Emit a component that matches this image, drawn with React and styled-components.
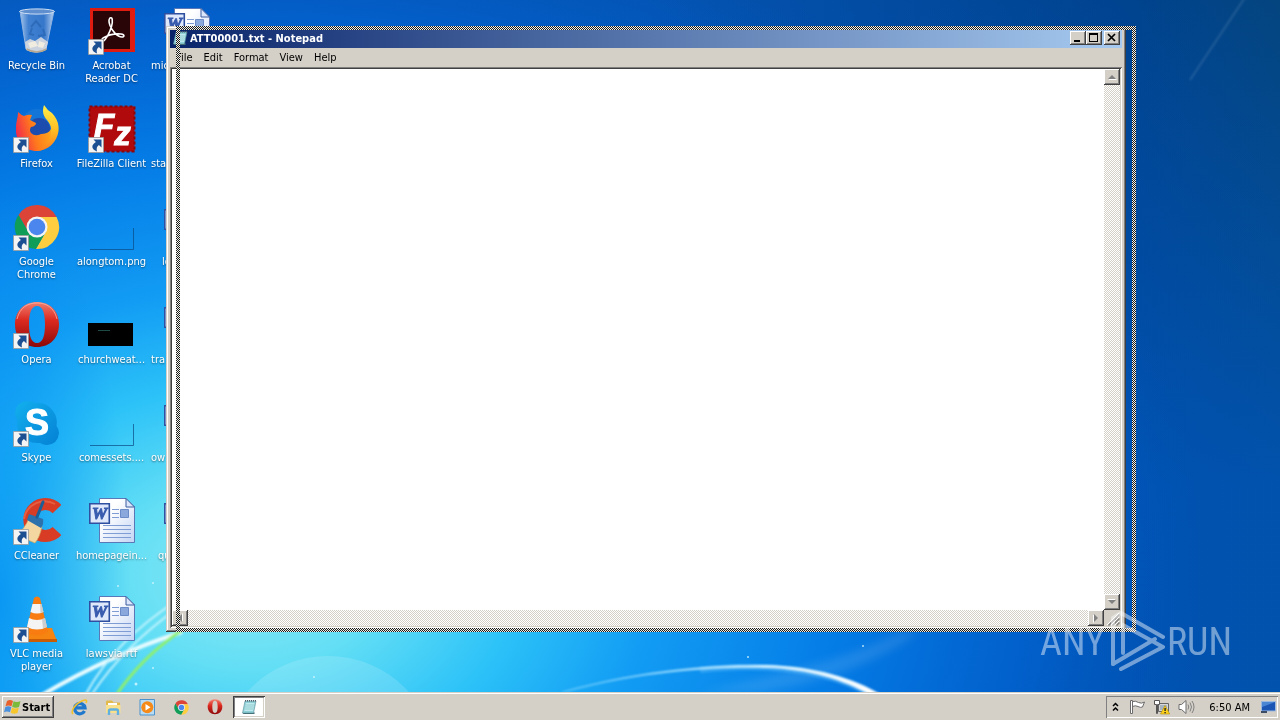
import React from 'react';
import styled, { createGlobalStyle, css } from 'styled-components';

const GlobalStyle = createGlobalStyle`
  * {
    box-sizing: border-box;
  }
  body {
    margin: 0;
    font-family: Tahoma, 'DejaVu Sans Condensed', 'DejaVu Sans', sans-serif;
    font-size: 11px;
    line-height: 13px;
    color: #000;
  }
  button {
    font: inherit;
    color: inherit;
    border: none;
    background: none;
    padding: 0;
  }
  svg {
    display: block;
    flex: none;
  }
`;

const raised = css`
  background: #d4d0c8;
  box-shadow: inset -1px -1px #404040, inset 1px 1px #fff,
    inset -2px -2px #808080;
`;

const checker = css`
  background: repeating-conic-gradient(#fff 0 25%, #d4d0c8 0 50%) 0 0 / 2px 2px;
`;

const Screen = styled.div`
  display: flex;
  flex-direction: column;
  min-height: 100vh;
  overflow: hidden;
`;

const Desktop = styled.main`
  position: relative;
  flex: 1;
  overflow: hidden;
  background: #0353b5;
`;

const WallpaperSvg = styled.svg`
  position: absolute;
  inset: 0;
  width: 100%;
  height: 100%;
`;

const IconGrid = styled.div`
  position: relative;
  display: grid;
  grid-auto-flow: column;
  grid-template-rows: repeat(7, 98px);
  grid-auto-columns: 75px;
`;

const Shortcut = styled.button`
  display: flex;
  flex-direction: column;
  align-items: center;
  gap: 4px;
  padding: 7px 2px 0 0;
  color: #fff;
`;

const ShortcutLabel = styled.span`
  max-width: 74px;
  text-shadow: 0 1px 2px rgba(0, 0, 0, 0.5);
  ${(p) =>
    p.$indent &&
    css`
      align-self: flex-start;
      padding-left: ${p.$indent}px;
    `}
`;

/* Window */

const Window = styled.section`
  position: absolute;
  top: 26px;
  right: 154px;
  bottom: 60px;
  left: 166px;
  display: flex;
  flex-direction: column;
  padding: 4px;
  background: #d4d0c8;
  box-shadow: inset -1px -1px #404040, inset 1px 1px #d4d0c8,
    inset -2px -2px #808080, inset 2px 2px #fff;
`;

const TitleBar = styled.header`
  display: flex;
  align-items: center;
  height: 18px;
  padding: 0 2px 2px;
  color: #fff;
  background: linear-gradient(90deg, #0a246a, #a6caf0);
`;

const Title = styled.h1`
  flex: 1;
  margin: 0 0 0 2px;
  font-size: 11px;
  font-weight: bold;
`;

const CaptionButton = styled.button`
  ${raised}
  width: 16px;
  height: 14px;
  margin-left: ${(p) => (p.$apart ? '2px' : '0')};
`;

const MenuBar = styled.nav`
  display: flex;
  height: 19px;
  padding-left: 1px;
`;

const MenuItem = styled.button`
  padding: 0 6px 0 5px;
`;

const Client = styled.div`
  flex: 1;
  display: grid;
  grid-template: 1fr 16px / 1fr 16px;
  padding: 2px;
  background: #fff;
  box-shadow: inset 1px 1px #808080, inset -1px -1px #fff,
    inset 2px 2px #404040, inset -2px -2px #d4d0c8;
`;

const TextArea = styled.textarea`
  width: 100%;
  height: 100%;
  border: none;
  outline: none;
  resize: none;
  font: 13px 'Liberation Mono', monospace;
  background: #fff;
`;

const ScrollBar = styled.div`
  ${checker}
  display: flex;
  flex-direction: ${(p) => (p.$vertical ? 'column' : 'row')};
  justify-content: space-between;
`;

const ScrollButton = styled.button`
  ${raised}
  width: 16px;
  height: 16px;
`;

const Grip = styled.div`
  background: #d4d0c8;
`;

const DragOutline = styled.div`
  position: absolute;
  top: 26px;
  right: 144px;
  bottom: 60px;
  left: 176px;
  padding: 4px;
  background: repeating-conic-gradient(#f4f2ec 0 25%, #1c1c1c 0 50%) 0 0 / 2px 2px;
  mask: linear-gradient(#000 0 0) content-box exclude, linear-gradient(#000 0 0);
  pointer-events: none;
`;

const Watermark = styled.div`
  position: absolute;
  right: 48px;
  bottom: 18px;
  display: flex;
  align-items: center;
  gap: 2px;
  color: #fff;
  opacity: 0.45;
  font: 400 38px/64px 'Roboto Condensed', 'Liberation Sans Narrow', sans-serif;
  pointer-events: none;
`;

/* Taskbar */

const TaskBar = styled.footer`
  position: relative;
  display: flex;
  align-items: center;
  height: 28px;
  padding: 2px 2px 0;
  background: #d4d0c8;
  box-shadow: inset 0 1px #d4d0c8, inset 0 2px #fff;
`;

const StartButton = styled.button`
  ${raised}
  display: flex;
  align-items: center;
  gap: 1px;
  height: 22px;
  padding: 0 4px 0 2px;
  font-weight: bold;
`;

const QuickLaunch = styled.div`
  flex: 1;
  display: flex;
  margin-left: 8px;
`;

const LaunchButton = styled.button`
  display: grid;
  place-items: center;
  width: 34px;
  height: 22px;
`;

const TaskButton = styled(LaunchButton)`
  width: 32px;
  margin-left: 1px;
  background: #fff;
  box-shadow: inset 1px 1px #404040, inset -1px -1px #fff,
    inset 2px 2px #808080, inset -2px -2px #d4d0c8;
`;

const Tray = styled.div`
  display: flex;
  align-items: center;
  gap: 8px;
  height: 22px;
  padding: 0 1px 0 4px;
  box-shadow: inset 1px 1px #808080, inset -1px -1px #fff;
`;

const Clock = styled.time`
  margin: 0 2px 0 6px;
`;

const Wallpaper = () => (
  <WallpaperSvg viewBox='0 0 1280 692' preserveAspectRatio='none'>
    <defs>
      <linearGradient id='sky' x1='0' y1='0' x2='1' y2='0'>
        <stop offset='0' stopColor='#0a57b8' />
        <stop offset='0.5' stopColor='#0454b4' />
        <stop offset='0.88' stopColor='#00438f' />
        <stop offset='1' stopColor='#04457f' />
      </linearGradient>
      <linearGradient id='deep' x1='0' y1='0' x2='0' y2='1'>
        <stop offset='0' stopColor='#0058c4' stopOpacity='0' />
        <stop offset='0.7' stopColor='#0058c0' />
      </linearGradient>
      <radialGradient id='glow' gradientUnits='userSpaceOnUse' cx='0' cy='0' r='1' gradientTransform='translate(250 575) scale(960 680)'>
        <stop offset='0' stopColor='#8ce8f4' />
        <stop offset='0.14' stopColor='#62def5' />
        <stop offset='0.28' stopColor='#2cc2f8' />
        <stop offset='0.42' stopColor='#129cf4' />
        <stop offset='0.62' stopColor='#047ce6' />
        <stop offset='0.82' stopColor='#0262d0' stopOpacity='0.8' />
        <stop offset='1' stopColor='#0256b8' stopOpacity='0' />
      </radialGradient>
      <radialGradient id='edge' gradientUnits='userSpaceOnUse' cx='0' cy='0' r='1' gradientTransform='translate(0 600) scale(130 420)'>
        <stop offset='0' stopColor='#008cf2' stopOpacity='0.8' />
        <stop offset='1' stopColor='#008cf2' stopOpacity='0' />
      </radialGradient>
      <linearGradient id='arc' x1='0' y1='0' x2='1' y2='0'>
        <stop offset='0' stopColor='#7fd6ff' stopOpacity='0.6' />
        <stop offset='0.55' stopColor='#c4ecff' />
        <stop offset='1' stopColor='#fff' />
      </linearGradient>
      <filter id='soft' x='-10%' y='-30%' width='120%' height='160%'>
        <feGaussianBlur stdDeviation='1' />
      </filter>
      <filter id='haze' x='-20%' y='-50%' width='140%' height='200%'>
        <feGaussianBlur stdDeviation='4' />
      </filter>
    </defs>
    <path fill='url(#sky)' d='M0 0h1280v692H0z' />
    <path fill='url(#deep)' d='M0 0h1280v692H0z' opacity='0.7' />
    <path fill='url(#glow)' d='M0 0h1280v692H0z' />
    <path fill='url(#edge)' d='M0 150h130v542H0z' />
    <path stroke='#fff' strokeWidth='2' opacity='0.12' filter='url(#soft)' d='M1190 80L1246 -4' />
    <circle cx='328' cy='765' r='109' fill='#fff' opacity='0.14' />
    <path fill='#fff' opacity='0.1' filter='url(#haze)' d='M700 692Q850 660 900 632H920Q850 680 760 692z' />
    <g fill='none' filter='url(#soft)'>
      <path stroke='#e8fcff' strokeWidth='4' d='M42 695Q110 655 182 632' />
      <path stroke='#c5f4fd' strokeWidth='2' d='M86 694Q115 640 178 600M92 694Q125 645 178 608' />
      <path stroke='#8ff06c' strokeWidth='3' d='M117 694Q142 657 182 630' />
      <path stroke='#58b8fc' strokeWidth='6' opacity='0.5' d='M700 670Q810 658 878 698' />
    </g>
    <path fill='url(#arc)' filter='url(#soft)' d='M560 692C650 667 720 665 765 665C815 666 855 679 880 694H868C845 681 810 669 765 668C720 667 650 670 566 692z' />
    <g fill='#d9f9ff' opacity='0.8'>
      <circle cx='118' cy='586' r='1' />
      <circle cx='153' cy='583' r='1' />
      <circle cx='136' cy='684' r='1.5' />
      <circle cx='153' cy='668' r='1' />
      <circle cx='863' cy='646' r='1' />
      <circle cx='748' cy='657' r='1' />
      <circle cx='314' cy='677' r='1' />
    </g>
  </WallpaperSvg>
);

const Arrow = () => (
  <g>
    <path fill='#f4f4f4' stroke='#9a9a9a' strokeWidth='0.8' d='M0.5 32.5h15v15h-15z' />
    <path fill='#1c4f91' d='M5.5 34.5H13.500v8l-2.600-2.400c-2.200 1.600-2.600 3.600-1.900 6.300-5.800-2-6.200-6.400-1.100-9.400z' />
  </g>
);

const RecycleIcon = () => (
  <svg width='48' height='48' viewBox='0 0 48 48'>
    <defs>
      <linearGradient id='glass' x1='0' x2='1'>
        <stop offset='0' stopColor='#c8dcf4' stopOpacity='0.85' />
        <stop offset='0.25' stopColor='#5c90d4' stopOpacity='0.7' />
        <stop offset='0.7' stopColor='#4c82cc' stopOpacity='0.7' />
        <stop offset='1' stopColor='#d4e4f8' stopOpacity='0.9' />
      </linearGradient>
    </defs>
    <path fill='url(#glass)' stroke='#8fb2e0' d='M7 4L13 42q10 6 20 0L41 4z' />
    <path fill='#d9dce0' opacity='0.9' d='M12 35l5-3 5 2 6-4 7 5-2 8q-10 5-20 0z' />
    <path fill='#f1ece0' d='M15 36l7-2 3 5-8 2zM26 34l6 2-2 5-5-1z' />
    <ellipse cx='24' cy='4.5' rx='17.5' ry='2.6' fill='#5f8fce' stroke='#d0e0f4' strokeWidth='1' />
    <path fill='none' stroke='#2560ac' strokeWidth='2' opacity='0.6' d='M18 20l5-6 5 6M30 22l2 6-7 1M21 28l-4-1 2-6' />
    <path fill='none' stroke='#b6a78f' strokeWidth='1.5' d='M13.500 42q10.500 6 20 0' />
  </svg>
);

const AcrobatIcon = () => (
  <svg width='48' height='48' viewBox='0 0 48 48'>
    <path fill='#e01c10' d='M2 1h45v44H2z' />
    <path fill='#2a0507' d='M5 4h37v38H5z' />
    <path fill='none' stroke='#fff' strokeWidth='1.6' strokeLinejoin='round' d='M22 11c2.500-1.500 3 3 1.500 8.500-2 7-6 13.500-8.500 15-2.500 1-2.500-1.500 0-3.500 5-3 12-4.500 18-4 4 .5 3.500 3 1 3-5 0-10-6.500-12-11.500-1.300-3.500-1-6.500 0-7.500z' />
    <Arrow />
  </svg>
);

const FirefoxIcon = () => (
  <svg width='48' height='48' viewBox='0 0 48 48'>
    <defs>
      <linearGradient id='fox' x1='0' y1='0.6' x2='1' y2='0.3'>
        <stop offset='0' stopColor='#f0264e' />
        <stop offset='0.45' stopColor='#ff7a1c' />
        <stop offset='1' stopColor='#ffb41c' />
      </linearGradient>
      <linearGradient id='tail' x1='0' y1='0' x2='0' y2='1'>
        <stop offset='0' stopColor='#fff04a' />
        <stop offset='0.55' stopColor='#ffbd20' />
        <stop offset='1' stopColor='#ff7a20' />
      </linearGradient>
    </defs>
    <circle cx='24' cy='20' r='16' fill='#1375d8' />
    <circle cx='26' cy='24' r='11' fill='#1c4cae' />
    <path fill='url(#fox)' d='M5 7q3 3 6 4 5-2 8-1l-2 5 6 3q0 3-5 4-2 3 0 6 4 4 10 1c8 0 10-4 11-8 6 10-3 25-15 25C11 46 2 36 3 23 3 16 5 13 5 7z' />
    <path fill='url(#tail)' d='M31 0q3 5 8 8c8 8 9 20 2 29-4 6-12 9-18 9 8-3 12-8 14-14 3-9 0-13-3-17-4-4-5-9-3-15z' />
    <Arrow />
  </svg>
);

const FileZillaIcon = () => (
  <svg width='48' height='48' viewBox='0 0 48 48'>
    <path fill='#b00a0c' stroke='#8c0608' strokeDasharray='3 2' strokeWidth='2' d='M1.500 1.500h45v45h-45z' />
    <text x='6' y='32' fill='#fff' stroke='#fff' fontFamily='Liberation Sans, sans-serif' fontStyle='italic' fontWeight='bold' fontSize='33'>
      F<tspan dy='8'>z</tspan>
    </text>
    <Arrow />
  </svg>
);

const ChromeMark = () => (
  <g>
    <path fill='#db4437' d='M15.300 29L5.500 12A22 22 0 0 1 43.600 14H24z' />
    <path fill='#ffcd40' d='M24 14H43.600A22 22 0 0 1 22.900 46L32.700 29z' />
    <path fill='#0f9d58' d='M32.700 29L22.900 46A22 22 0 0 1 5.500 12L15.300 29z' />
    <circle cx='24' cy='24' r='10.5' fill='#f4f4f4' />
    <circle cx='24' cy='24' r='8.3' fill='#4a86ee' />
  </g>
);

const ChromeIcon = () => (
  <svg width='48' height='48' viewBox='0 0 48 48'>
    <ChromeMark />
    <Arrow />
  </svg>
);

const OperaMark = () => (
  <g>
    <path fill='url(#opera)' fillRule='evenodd' d='M24 1C37 1 46 10 46 23.500S37 46 24 46 2 37 2 23.500 11 1 24 1zM24 5c-6 0-8 8-8 18.500S18 42 24 42s8-8 8-18.500S30 5 24 5z' />
    <path fill='none' stroke='#ffb8ae' opacity='0.7' d='M4 18C7 6 15 2 24 2s17 4 20 16' />
  </g>
);

const OperaIcon = () => (
  <svg width='48' height='48' viewBox='0 0 48 48'>
    <defs>
      <linearGradient id='opera' x1='0' y1='0' x2='0' y2='1'>
        <stop offset='0' stopColor='#f08070' />
        <stop offset='0.4' stopColor='#dc2a20' />
        <stop offset='1' stopColor='#8c0808' />
      </linearGradient>
    </defs>
    <OperaMark />
    <Arrow />
  </svg>
);

const SkypeIcon = () => (
  <svg width='48' height='48' viewBox='0 0 48 48'>
    <defs>
      <linearGradient id='skype' x1='0' y1='0' x2='1' y2='1'>
        <stop offset='0' stopColor='#12b0ee' />
        <stop offset='1' stopColor='#0480d4' />
      </linearGradient>
    </defs>
    <path fill='url(#skype)' d='M14 2q5 0 8 2.200Q34 3 40 12q5 7 3.500 15Q46 30 46 34 45 45 34 46q-4 0-7-2Q14 45 7 35 3 28 4.500 21 2 18 2 14 3 3 14 2z' />
    <text x='24' y='36' fill='#fff' stroke='#fff' textAnchor='middle' fontFamily='Liberation Sans, sans-serif' fontWeight='bold' fontSize='36'>S</text>
    <Arrow />
  </svg>
);

const CCleanerIcon = () => (
  <svg width='48' height='48' viewBox='0 0 48 48'>
    <path fill='none' stroke='#d83c24' strokeWidth='12' d='M44 12A16 16 0 1 0 44 34' />
    <path fill='none' stroke='#f07454' strokeWidth='2' opacity='0.6' d='M42 7A21 21 0 0 0 11 22' />
    <path fill='#f4d7a0' stroke='#d2a660' strokeWidth='0.7' d='M16 21L29 29Q27 40 22 46L3 38Q12 32 16 21z' />
    <path fill='#2c70ac' d='M16 17L30 22Q31 27 28 31L14 23z' />
    <path stroke='#1c5f96' strokeWidth='3' strokeLinecap='round' d='M30 5L24 20' />
    <Arrow />
  </svg>
);

const VlcIcon = () => (
  <svg width='48' height='48' viewBox='0 0 48 48'>
    <path fill='#f58410' d='M8 33H39L44 46H4z' />
    <path fill='#c95d05' d='M4 44h40v3H4z' />
    <path fill='#f87c10' d='M21 3q3-3 6 0L35 37q-11 7-22 0z' />
    <path fill='#f4f4f4' d='M19.500 9h9L30.500 17q-6.500 3-13 0zM16 23q8 4 16 0L34 32q-10 5-20 0z' />
    <path fill='#b4b4b4' opacity='0.6' d='M27 9h1.500l2 8-3 1zM29 24l3-1L34 32l-4 1.500z' />
    <Arrow />
  </svg>
);

const WordIcon = () => (
  <svg width='48' height='48' viewBox='0 0 48 48'>
    <defs>
      <linearGradient id='page' x1='0' y1='0' x2='1' y2='1'>
        <stop offset='0.3' stopColor='#fff' />
        <stop offset='1' stopColor='#c3d4f4' />
      </linearGradient>
    </defs>
    <path fill='url(#page)' stroke='#5a78b8' d='M11.500 1.500H38L46.500 10V45.500H11.500z' />
    <path fill='#dbe6fa' stroke='#3d5c9e' d='M38 1.500V10H46.500z' />
    <path stroke='#7f9cd4' d='M24 12.500h7M24 16.500h7M24 20.500h7M15 28.500h28M15 32.500h28M15 36.500h28M15 40.500h28' />
    <path fill='#8ba8dc' stroke='#6a8ac8' d='M32.500 12.500h8v8h-8z' />
    <path fill='#dfe8fb' stroke='#2f4fa0' strokeWidth='1.6' d='M1.800 6.800h19.500v19.500H1.800z' />
    <text x='11.5' y='22' fill='#3a5cae' textAnchor='middle' fontFamily='Liberation Serif, serif' fontStyle='italic' fontWeight='bold' fontSize='17' stroke='#3a5cae'>W</text>
  </svg>
);

const GhostIcon = () => (
  <svg width='48' height='48' viewBox='0 0 48 48'>
    <path fill='none' stroke='#0b4a84' opacity='0.7' d='M2 46.500H45.500V25' />
  </svg>
);

const BlackIcon = () => (
  <svg width='48' height='48' viewBox='0 0 48 48'>
    <path fill='#000' d='M0 22h45v23H0z' />
    <path stroke='#1d4a44' d='M10 29.500h12' />
  </svg>
);

const BlankIcon = () => <svg width='48' height='48' />;

const NotepadIcon = () => (
  <svg width='16' height='16' viewBox='0 0 16 16'>
    <path fill='#8fd0d8' stroke='#5c8f98' strokeWidth='0.6' d='M4 2H15L12.500 14H1.500z' />
    <path fill='#bfe9ec' d='M5 4h8.500l-1.500 8H3.300z' />
    <path stroke='#6fb0ba' strokeWidth='0.5' d='M4.500 6h8.500M4 8h8.500M3.700 10H12' />
    <path stroke='#55606a' strokeWidth='1.6' strokeDasharray='1 1' d='M4 1.800H15.500' />
    <path fill='#44707a' d='M1.500 14h11l1-1v2h-11z' />
  </svg>
);

const WindowsIcon = () => (
  <svg width='17' height='16' viewBox='0 0 17 16'>
    <path fill='#e8602c' d='M3 2q3-2 6 0L7.500 7.300q-3-1.500-6 0z' />
    <path fill='#7cba3c' d='M9.600 2.300q3 1.500 6.900 0L15 8q-3.300 1.500-6.900-.2z' />
    <path fill='#4a90dc' d='M1.300 8q3-1.500 6 0L6 13.300q-3-1.700-6 0z' />
    <path fill='#f7c62c' d='M8 8.500q3 1.700 6.800.2L13.500 14q-3.500 1.500-6.800-.2z' />
  </svg>
);

const ExplorerIcon = () => (
  <svg width='17' height='17' viewBox='0 0 17 17'>
    <path fill='none' stroke='#1f78cc' strokeWidth='3.2' d='M13.500 12A5.200 5.200 0 1 1 14 8.800H5' />
    <path fill='none' stroke='#f2c02c' strokeWidth='1.6' d='M2 15C-1 12 5 4 12 1.500 16 0 16 2 15 4' />
  </svg>
);

const FolderIcon = () => (
  <svg width='17' height='17' viewBox='0 0 17 17'>
    <path fill='#e3b94c' d='M1 3q0-1.500 1-1.500h5l1.500 2H15v10H1z' />
    <path fill='#f8e08c' d='M1 6h14.500v8H1z' />
    <path fill='#fff' d='M3 4h9v2H3z' />
    <path fill='none' stroke='#62b0e0' strokeWidth='2.4' d='M4 16v-4q0-1.500 1.500-1.500h6q1.500 0 1.500 1.500v4' />
  </svg>
);

const PlayerIcon = () => (
  <svg width='17' height='17' viewBox='0 0 17 17'>
    <path fill='#b8dcf4' stroke='#4c92cc' d='M1 .5h14.500v15.500H1z' />
    <circle cx='8.3' cy='8.3' r='6' fill='#f58a18' />
    <path fill='#fff' d='M6.500 5l5 3.300-5 3.300z' />
  </svg>
);

const FlagIcon = () => (
  <svg width='17' height='16' viewBox='0 0 17 16'>
    <path fill='#fff' stroke='#6c6c6c' d='M1.500 1.500h2v13h-2zM3.500 2.500q3-1 6 1 3 1.500 6-.5l-2 5q-2 1-4.500-.5t-5.500 0z' />
  </svg>
);

const NetworkIcon = () => (
  <svg width='16' height='16' viewBox='0 0 16 16'>
    <path fill='#d8d8d8' stroke='#666' d='M4.500 4.500h10v8h-10z' />
    <path fill='#a8b4c0' d='M6 6h7v5H6z' />
    <path fill='#fff' stroke='#555' d='M.5 1.500h5v4h-2v9h-1v-9h-2z' />
    <path fill='#ffd21c' stroke='#b48c00' strokeWidth='0.6' d='M11 6.500L15.700 15H6.500z' />
    <path stroke='#222' strokeWidth='1.4' d='M11.100 9v3M11.100 13v1.200' />
  </svg>
);

const SpeakerIcon = () => (
  <svg width='17' height='16' viewBox='0 0 17 16'>
    <path fill='#fff' stroke='#6c6c6c' d='M1 5.500h2.500L8 1.500v13L3.500 10.500H1z' />
    <path fill='none' stroke='#808080' d='M10 5.500q1.500 2.500 0 5M12 3.500q3 4.500 0 9M14 2q4 6 0 12' />
  </svg>
);

const MonitorIcon = () => (
  <svg width='17' height='16' viewBox='0 0 17 16'>
    <path fill='#1c56b4' stroke='#9cb8dc' d='M1.500 2.500h14v9.500h-14z' />
    <path fill='#4a86d4' d='M2 3h13L2 8z' />
    <path fill='#3c4c64' d='M1 12h6v2H1z' />
  </svg>
);

const Triangle = ({ rotate = 0 }) => (
  <svg width='16' height='16' viewBox='0 0 16 16'>
    <g transform={`rotate(${rotate} 8 8)`}>
      <path fill='#fff' d='M5 11h8l-1-1H5z' />
      <path fill='#808080' d='M8 6L12 10H4z' />
    </g>
  </svg>
);

const PlayMark = () => (
  <svg width='58' height='64' viewBox='0 0 58 64'>
    <g fill='none' stroke='#fff' strokeWidth='4' strokeLinejoin='round' strokeLinecap='round'>
      <path d='M6 54V8L14 3L56 27' />
      <path d='M16 43V15L56 37L14 59' />
      <path d='M6 54L48 29' />
    </g>
  </svg>
);

const shortcuts = [
  { label: 'Recycle Bin', icon: RecycleIcon },
  { label: 'Firefox', icon: FirefoxIcon },
  { label: 'Google Chrome', icon: ChromeIcon },
  { label: 'Opera', icon: OperaIcon },
  { label: 'Skype', icon: SkypeIcon },
  { label: 'CCleaner', icon: CCleanerIcon },
  { label: 'VLC media player', icon: VlcIcon },
  { label: 'Acrobat Reader DC', icon: AcrobatIcon },
  { label: 'FileZilla Client', icon: FileZillaIcon },
  { label: 'alongtom.png', icon: GhostIcon },
  { label: 'churchweat...', icon: BlackIcon },
  { label: 'comessets....', icon: GhostIcon },
  { label: 'homepagein...', icon: WordIcon },
  { label: 'lawsvia.rtf', icon: WordIcon },
  { label: 'mic', icon: WordIcon, indent: 1 },
  { label: 'sta', icon: BlankIcon, indent: 1 },
  { label: 'lo', icon: WordIcon, indent: 12 },
  { label: 'tra', icon: WordIcon, indent: 1 },
  { label: 'ow', icon: WordIcon, indent: 1 },
  { label: 'qu', icon: WordIcon, indent: 8 },
];

const Notepad = () => (
  <Window>
    <TitleBar>
      <NotepadIcon />
      <Title>ATT00001.txt - Notepad</Title>
      <CaptionButton aria-label='Minimize'>
        <svg width='16' height='14'>
          <path fill='#000' d='M4 9h6v2H4z' />
        </svg>
      </CaptionButton>
      <CaptionButton aria-label='Maximize'>
        <svg width='16' height='14'>
          <path fill='#000' fillRule='evenodd' d='M3 2h9v9H3zM4 4h7v6H4z' />
        </svg>
      </CaptionButton>
      <CaptionButton $apart aria-label='Close'>
        <svg width='16' height='14'>
          <path stroke='#000' strokeWidth='1.7' d='M4 3l7 7M11 3l-7 7' />
        </svg>
      </CaptionButton>
    </TitleBar>
    <MenuBar>
      {['File', 'Edit', 'Format', 'View', 'Help'].map((item) => (
        <MenuItem key={item}>{item}</MenuItem>
      ))}
    </MenuBar>
    <Client>
      <TextArea aria-label='Document text' />
      <ScrollBar $vertical>
        <ScrollButton aria-label='Scroll up'>
          <Triangle />
        </ScrollButton>
        <ScrollButton aria-label='Scroll down'>
          <Triangle rotate={180} />
        </ScrollButton>
      </ScrollBar>
      <ScrollBar>
        <ScrollButton aria-label='Scroll left'>
          <Triangle rotate={270} />
        </ScrollButton>
        <ScrollButton aria-label='Scroll right'>
          <Triangle rotate={90} />
        </ScrollButton>
      </ScrollBar>
      <Grip>
        <svg width='16' height='16'>
          <path stroke='#fff' d='M3 15L15 3M7 15L15 7M11 15L15 11' />
          <path stroke='#808080' strokeWidth='1.5' d='M4.500 15.500L15.500 4.500M8.500 15.500L15.500 8.500M12.500 15.500L15.500 12.500' />
        </svg>
      </Grip>
    </Client>
  </Window>
);

const App = () => (
  <Screen>
    <GlobalStyle />
    <Desktop>
      <Wallpaper />
      <IconGrid>
        {shortcuts.map(({ label, icon: Icon, indent }) => (
          <Shortcut key={label}>
            <Icon />
            <ShortcutLabel $indent={indent}>{label}</ShortcutLabel>
          </Shortcut>
        ))}
      </IconGrid>
      <Notepad />
      <DragOutline />
      <Watermark>
        <span>ANY</span>
        <PlayMark />
        <span>RUN</span>
      </Watermark>
    </Desktop>
    <TaskBar>
      <StartButton>
        <WindowsIcon />
        Start
      </StartButton>
      <QuickLaunch>
        <LaunchButton aria-label='Internet Explorer'>
          <ExplorerIcon />
        </LaunchButton>
        <LaunchButton aria-label='Explorer'>
          <FolderIcon />
        </LaunchButton>
        <LaunchButton aria-label='Media Player'>
          <PlayerIcon />
        </LaunchButton>
        <LaunchButton aria-label='Chrome'>
          <svg width='15' height='15' viewBox='1 1 46 46'>
            <ChromeMark />
          </svg>
        </LaunchButton>
        <LaunchButton aria-label='Opera'>
          <svg width='16' height='16' viewBox='0 0 48 48'>
            <OperaMark />
          </svg>
        </LaunchButton>
        <TaskButton aria-label='Notepad'>
          <NotepadIcon />
        </TaskButton>
      </QuickLaunch>
      <Tray>
        <svg width='11' height='14'>
          <path fill='none' stroke='#000' strokeWidth='1.5' d='M3 6l2.500-2.500L8 6M3 10.500L5.500 8 8 10.500' />
        </svg>
        <FlagIcon />
        <NetworkIcon />
        <SpeakerIcon />
        <Clock>6:50 AM</Clock>
        <MonitorIcon />
      </Tray>
    </TaskBar>
  </Screen>
);

export default App;
